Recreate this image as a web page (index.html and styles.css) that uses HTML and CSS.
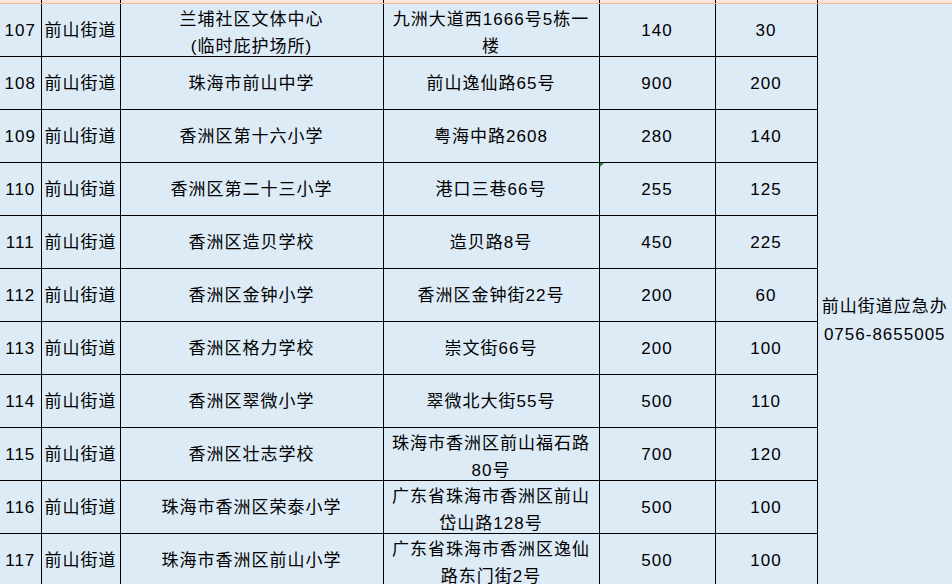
FILE: index.html
```html
<!DOCTYPE html>
<html lang="zh-CN">
<head>
<meta charset="utf-8">
<title>前山街道避护场所</title>
<link rel="stylesheet" href="styles.css">
</head>
<body>
<table class="sheet">
  <colgroup>
    <col class="c-no">
    <col class="c-street">
    <col class="c-name">
    <col class="c-addr">
    <col class="c-area">
    <col class="c-cap">
    <col class="c-contact">
  </colgroup>
  <tbody>
    <tr class="prev-row"><td></td><td></td><td></td><td></td><td></td><td></td><td></td></tr>
    <tr>
      <td>107</td><td>前山街道</td><td><div class="two">兰埔社区文体中心<br>(临时庇护场所)</div></td><td><div class="two">九洲大道西1666号5栋一<br>楼</div></td><td>140</td><td>30</td>
      <td class="contact" rowspan="12"><div class="contact-text">前山街道应急办<br>0756-8655005</div></td>
    </tr>
    <tr><td>108</td><td>前山街道</td><td>珠海市前山中学</td><td>前山逸仙路65号</td><td>900</td><td>200</td></tr>
    <tr><td>109</td><td>前山街道</td><td>香洲区第十六小学</td><td>粤海中路2608</td><td>280</td><td>140</td></tr>
    <tr><td>110</td><td>前山街道</td><td>香洲区第二十三小学</td><td>港口三巷66号</td><td class="flagged"><span class="flag"></span>255</td><td>125</td></tr>
    <tr><td>111</td><td>前山街道</td><td>香洲区造贝学校</td><td>造贝路8号</td><td>450</td><td>225</td></tr>
    <tr><td>112</td><td>前山街道</td><td>香洲区金钟小学</td><td>香洲区金钟街22号</td><td>200</td><td>60</td></tr>
    <tr><td>113</td><td>前山街道</td><td>香洲区格力学校</td><td>崇文街66号</td><td>200</td><td>100</td></tr>
    <tr><td>114</td><td>前山街道</td><td>香洲区翠微小学</td><td>翠微北大街55号</td><td>500</td><td>110</td></tr>
    <tr><td>115</td><td>前山街道</td><td>香洲区壮志学校</td><td><div class="two">珠海市香洲区前山福石路<br>80号</div></td><td>700</td><td>120</td></tr>
    <tr><td>116</td><td>前山街道</td><td>珠海市香洲区荣泰小学</td><td><div class="two">广东省珠海市香洲区前山<br>岱山路128号</div></td><td>500</td><td>100</td></tr>
    <tr><td>117</td><td>前山街道</td><td>珠海市香洲区前山小学</td><td><div class="two">广东省珠海市香洲区逸仙<br>路东门街2号</div></td><td>500</td><td>100</td></tr>
  </tbody>
</table>
</body>
</html>
```

FILE: styles.css
```css
html, body {
  margin: 0;
  padding: 0;
  background: #ddebf7;
  overflow: hidden;
}

.sheet {
  border-collapse: collapse;
  table-layout: fixed;
  width: 952px;
  font-family: "Liberation Sans", "Noto Sans CJK SC", sans-serif;
  font-size: 17px;
  letter-spacing: 1px;
  color: #000;
  background: #ddebf7;
}

.c-no { width: 41px; }
.c-street { width: 79px; }
.c-name { width: 263px; }
.c-addr { width: 216px; }
.c-area { width: 116px; }
.c-cap { width: 102px; }
.c-contact { width: 135px; }

.sheet tr {
  height: 53px;
}

.sheet td {
  padding: 2px 0 0;
  border: 1px solid #000;
  text-align: center;
  vertical-align: middle;
  line-height: 26px;
  white-space: nowrap;
  overflow: visible;
}

.two {
  line-height: 27px;
  margin-bottom: -4px;
}

.sheet td:first-child {
  border-left: none;
}

.sheet tr.prev-row {
  height: 3px;
}

.prev-row td {
  padding: 0;
  line-height: 0;
  background: #fce4d6;
  border-top: none;
  border-bottom: 1px solid #f4b99a;
}

.sheet td.contact {
  vertical-align: top;
  border-right: none;
  padding: 0;
}

.contact-text {
  padding-top: 289px;
  line-height: 28px;
}

.flagged {
  position: relative;
}

.flag {
  position: absolute;
  left: 0;
  top: 0;
  width: 0;
  height: 0;
  border-top: 4px solid #1a8f1a;
  border-right: 4px solid transparent;
}
```
